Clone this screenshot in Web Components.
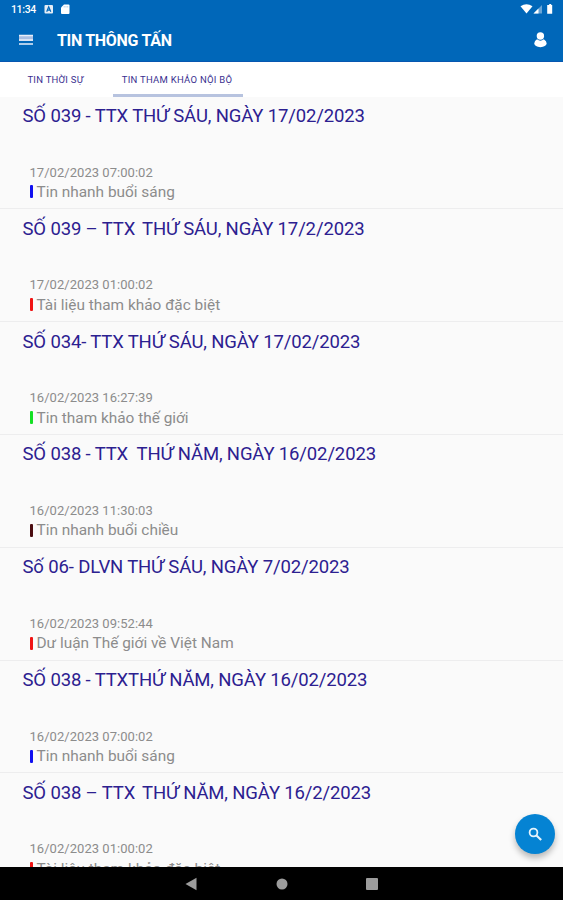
<!DOCTYPE html>
<html lang="vi">
<head>
<meta charset="utf-8">
<title>Tin Thông Tấn</title>
<style>
html,body{margin:0;height:100%;overflow:hidden;background:#fafafa}
body{font-family:Roboto,"Noto Sans",sans-serif}
news-item span{margin-left:2.500px}
</style>
</head>
<body>
<news-app>
  <status-bar slot="top" time="11:34"></status-bar>
  <app-bar slot="top">TIN THÔNG TẤN</app-bar>
  <tab-bar slot="top">
    <tab-item style="--w:113px;--ls:.25px;--shift:2px">TIN THỜI SỰ</tab-item>
    <tab-item active style="--w:130px;--ls:.27px;--shift:2px">TIN THAM KHẢO NỘI BỘ</tab-item>
  </tab-bar>
  <news-item date="17/02/2023 07:00:02" category="Tin nhanh buổi sáng" style="--c:#1010f0">SỐ 039 - TTX THỨ SÁU, NGÀY 17/02/2023</news-item>
  <news-item date="17/02/2023 01:00:02" category="Tài liệu tham khảo đặc biệt" style="--c:#f01414">SỐ 039 – TTX <span>THỨ SÁU, NGÀY 17/2/2023</span></news-item>
  <news-item date="16/02/2023 16:27:39" category="Tin tham khảo thế giới" style="--c:#14e024">SỐ 034- TTX THỨ SÁU, NGÀY 17/02/2023</news-item>
  <news-item date="16/02/2023 11:30:03" category="Tin nhanh buổi chiều" style="--c:#4a0c10">SỐ 038 - TTX  THỨ NĂM, NGÀY 16/02/2023</news-item>
  <news-item date="16/02/2023 09:52:44" category="Dư luận Thế giới về Việt Nam" style="--c:#f01414">Số 06- DLVN THỨ SÁU, NGÀY 7/02/2023</news-item>
  <news-item date="16/02/2023 07:00:02" category="Tin nhanh buổi sáng" style="--c:#1010f0">SỐ 038 - TTXTHỨ NĂM, NGÀY 16/02/2023</news-item>
  <news-item date="16/02/2023 01:00:02" category="Tài liệu tham khảo đặc biệt" style="--c:#f01414">SỐ 038 – TTX <span>THỨ NĂM, NGÀY 16/2/2023</span></news-item>
  <search-fab slot="fab"></search-fab>
  <nav-bar slot="bottom"></nav-bar>
</news-app>
<script>
const define = (name, html) => customElements.define(name, class extends HTMLElement {
  constructor() {
    super();
    const t = document.createElement('template');
    t.innerHTML = html;
    this.attachShadow({mode: 'open'}).append(t.content.cloneNode(true));
    this.shadowRoot.querySelectorAll('[data-from]').forEach(e => {
      e.textContent = this.getAttribute(e.dataset.from) || '';
    });
  }
});

define('news-app', `<style>
:host{display:flex;flex-direction:column;position:relative;width:563px;height:900px;overflow:hidden;background:#fafafa}
main{flex:1;min-height:0;overflow:hidden}
</style><slot name="top"></slot><main><slot></slot></main><slot name="fab"></slot><slot name="bottom"></slot>`);

define('status-bar', `<style>
:host{display:flex;align-items:center;box-sizing:border-box;height:19px;padding:0 10px 0 11px;background:#0067b9;color:#fff;flex:none}
span{font-size:10.5px;line-height:19px;font-weight:500;width:33px;letter-spacing:-.35px}
svg{display:block;margin-top:-1px}.r{margin-left:auto}
</style><span data-from="time"></span>
<svg width="28" height="12" viewBox="0 0 28 12"><rect x=".5" y="2" width="8.5" height="8.5" rx="1" fill="#e4edf6"/><path d="M2.7 8.8 4.7 3.8 6.8 8.8M3.4 7.2H6" fill="none" stroke="#0067b9" stroke-width="1.2"/><path d="M20 1.5h4.5a1 1 0 0 1 1 1v7.500a1 1 0 0 1-1 1h-6.500a1 1 0 0 1-1-1V4.500z" fill="#fff"/><path d="M20.200 3v1.500M22 3v1.500M23.700 3v1.500" stroke="#9bc1e2" stroke-width=".7"/></svg>
<svg class="r" width="33" height="12" viewBox="0 0 33 12"><path d="M.5 3.300Q6.500-.6 12.500 3.300L6.500 10.500z" fill="#fff"/><path d="M22 2v8.500h-8.500z" fill="#69a5d6"/><path d="M18.500 5.500v5h-5z" fill="#fff"/><path d="M28.200 2h1v-1h2v1h1v8.700h-5V2z" fill="#fff"/></svg>`);

define('app-bar', `<style>
:host{display:flex;align-items:center;box-sizing:border-box;height:43px;padding:0 15px 0 19px;background:#0067b9;border-bottom:1px solid #0757b0;color:#fff;flex:none}
h1{margin:1px 0 0 23px;font-size:16px;line-height:20px;font-weight:700;letter-spacing:-.3px;white-space:nowrap}
svg{display:block}.u{margin-left:auto}
</style><svg width="15" height="12" viewBox="0 0 15 12"><rect y="1" width="14" height="6" fill="#a9bfe3"/><path d="M0 1.500h14M0 6h14M0 10h14" stroke="#e8effa" stroke-width="1.600"/></svg>
<h1><slot></slot></h1>
<svg class="u" width="16" height="18" viewBox="0 0 16 18"><circle cx="8.400" cy="5" r="3.700" fill="#fff"/><path d="M5 8.300Q8.400 11 11.800 8.300 14.700 10 14.700 12.500 14 15.800 8.400 16.200 2.800 15.800 2.200 12.500 2.500 9.500 5 8.300z" fill="#fff"/></svg>`);

define('tab-bar', `<style>
:host{display:flex;height:34.500px;background:#fff;flex:none}
</style><slot></slot>`);

define('tab-item', `<style>
:host{display:flex;flex-direction:column;align-items:center;width:var(--w);height:35px;color:#3b3090;font-size:9.500px;letter-spacing:var(--ls);white-space:nowrap}
div{flex:1;line-height:36px;height:32px;padding-right:var(--shift)}
i{display:block;align-self:stretch;height:3px;flex:none}
:host([active]) i{background:#b7c3df;position:relative}
</style><div><slot></slot></div><i></i>`);

define('news-item', `<style>
:host{display:block;box-sizing:border-box;height:112.830px;padding-top:6.500px;border-bottom:1px solid #ededee}
h2{margin:0 0 34.500px 22.500px;height:26px;font-size:18.500px;line-height:26px;font-weight:400;letter-spacing:-.14px;color:#2c2090;white-space:pre}
time{display:block;margin-left:29.500px;height:17px;line-height:17px;font-size:13px;letter-spacing:.04px;color:#8c8c8c;white-space:pre}
p{display:flex;align-items:center;margin:.4px 0 0 29.500px;height:22px;line-height:22px;font-size:15.400px;color:#8c8c8c;white-space:pre}
i{width:3px;height:13px;margin-right:4px;border-radius:1px;background:var(--c)}
</style><h2><slot></slot></h2><time data-from="date"></time><p><i></i><span data-from="category"></span></p>`);

define('search-fab', `<style>
:host{position:absolute;left:515px;top:814px;width:40px;height:40px;border-radius:50%;background:#0583d3;display:grid;place-items:center;box-shadow:0 4px 6px rgba(0,0,0,.27)}
svg{display:block}
</style><svg width="16" height="16" viewBox="0 0 16 16" fill="none" stroke="#e5f3fc"><circle cx="6.500" cy="6.500" r="3.900" stroke-width="1.800"/><path d="M9.200 9.200 14.200 14" stroke-width="2.200"/></svg>`);

define('nav-bar', `<style>
:host{display:flex;align-items:center;justify-content:center;height:33px;background:#000;flex:none}
svg{display:block}
</style><svg width="194" height="14" viewBox="0 0 194 14" fill="#9c9c9c"><path d="M.5 7 11.500 .8v12.400z"/><circle cx="97" cy="7" r="5.500"/><rect x="181" y="1" width="12" height="12" rx="1"/></svg>`);
</script>
</body>
</html>
